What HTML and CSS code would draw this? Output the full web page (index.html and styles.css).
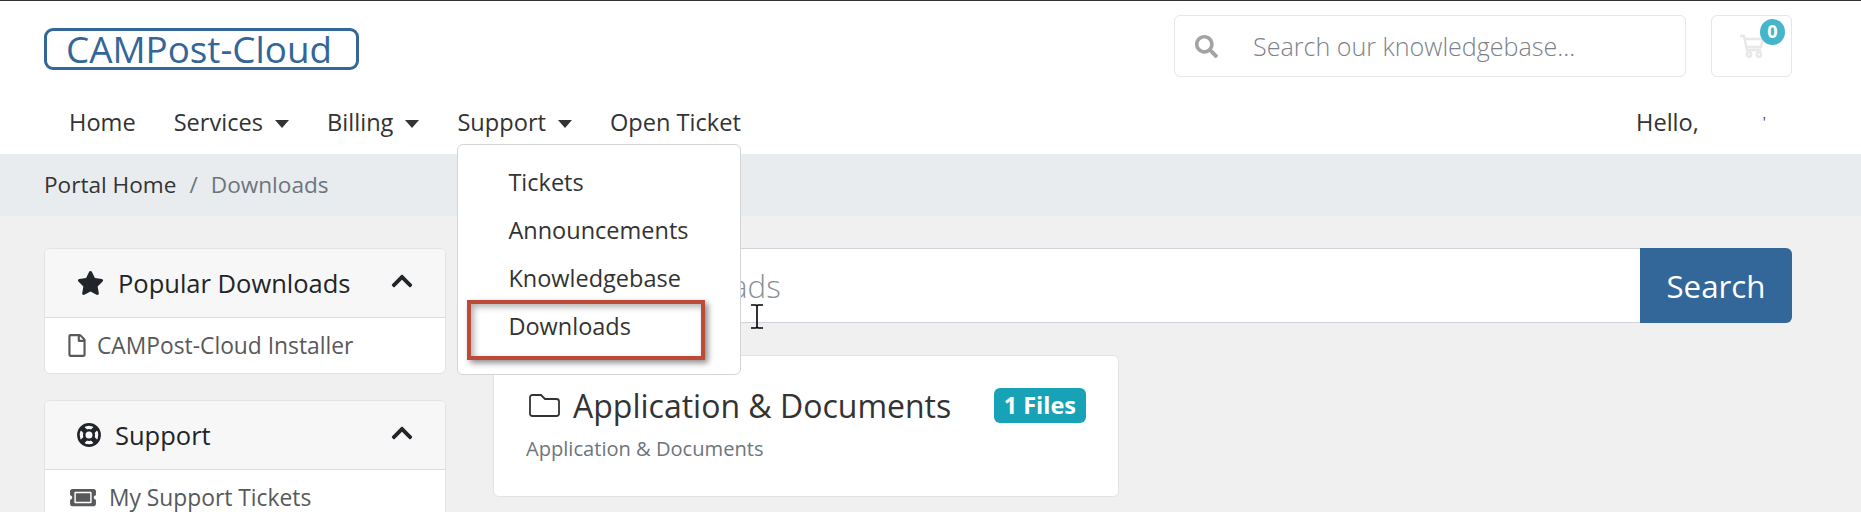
FILE: index.html
```html
<!DOCTYPE html>
<html lang="en">
<head>
    <meta charset="UTF-8">
    <meta name="viewport" content="width=device-width, initial-scale=1.0">
    <title>Downloads - CAMPost-Cloud</title>
    <link rel="stylesheet" href="styles.css">
</head>
<body>

    <header class="site-header">
        <div class="top-row">
            <a class="logo" href="#">CAMPost-Cloud</a>
            <div class="header-tools">
                <div class="kb-search">
                    <svg class="kb-search-icon" viewBox="0 0 512 512"><path d="M505 442.7L405.3 343c-4.5-4.5-10.6-7-17-7H372c27.6-35.3 44-79.7 44-128C416 93.1 322.9 0 208 0S0 93.1 0 208s93.1 208 208 208c48.3 0 92.7-16.4 128-44v16.3c0 6.4 2.5 12.5 7 17l99.7 99.7c9.4 9.4 24.6 9.4 33.9 0l28.3-28.3c9.4-9.4 9.4-24.6.1-34zM208 336c-70.7 0-128-57.2-128-128 0-70.7 57.2-128 128-128 70.7 0 128 57.2 128 128 0 70.7-57.2 128-128 128z"/></svg>
                    <span class="kb-search-text">Search our knowledgebase...</span>
                </div>
                <a class="cart-button" href="#">
                    <svg class="cart-icon" viewBox="0 0 26 24"><path d="M1 2h4l3 14h14M6 5h18l-2 8H8"/><circle cx="10" cy="20.5" r="2.2"/><circle cx="20" cy="20.5" r="2.2"/></svg>
                    <span class="cart-count">0</span>
                </a>
            </div>
        </div>

        <nav class="main-nav">
            <ul class="nav-links">
                <li><a href="#">Home</a></li>
                <li><a href="#">Services<span class="caret"></span></a></li>
                <li><a href="#">Billing<span class="caret"></span></a></li>
                <li class="nav-open">
                    <a href="#">Support<span class="caret"></span></a>
                    <!-- Open dropdown with the annotation box drawn on top -->
                    <ul class="dropdown">
                        <li><a href="#">Tickets</a></li>
                        <li><a href="#">Announcements</a></li>
                        <li><a href="#">Knowledgebase</a></li>
                        <li><a href="#">Downloads</a></li>
                        <li class="highlight-box"></li>
                    </ul>
                </li>
                <li><a href="#">Open Ticket</a></li>
            </ul>
            <div class="account">Hello,<span class="account-name">'</span></div>
        </nav>
    </header>

    <div class="breadcrumb-bar">
        <a href="#">Portal Home</a>
        <span class="breadcrumb-sep">/</span>
        <span class="breadcrumb-current">Downloads</span>
    </div>

    <main class="page-body">
        <aside class="sidebar">
            <section class="panel">
                <div class="panel-heading">
                    <svg class="panel-icon star-icon" viewBox="0 0 576 512"><path d="M259.3 17.8L194 150.2 47.9 171.5c-26.2 3.8-36.7 36.1-17.7 54.6l105.7 103-25 145.5c-4.5 26.3 23.2 46 46.4 33.7L288 439.6l130.7 68.7c23.2 12.2 50.9-7.4 46.4-33.7l-25-145.5 105.7-103c19-18.5 8.5-50.8-17.7-54.6L382 150.2 316.7 17.8c-11.7-23.6-45.6-23.9-57.4 0z"/></svg>
                    <h3>Popular Downloads</h3>
                    <svg class="chevron" viewBox="0 0 448 512"><path d="M240.971 130.524l194.343 194.343c9.373 9.373 9.373 24.569 0 33.941l-22.667 22.667c-9.357 9.357-24.522 9.375-33.901.04L224 227.495 69.255 381.516c-9.379 9.335-24.544 9.317-33.901-.04l-22.667-22.667c-9.373-9.373-9.373-24.569 0-33.941L207.03 130.525c9.372-9.373 24.568-9.373 33.941-.001z"/></svg>
                </div>
                <a class="panel-item" href="#">
                    <svg class="file-icon" viewBox="0 0 384 512"><path d="M369.9 97.9L286 14C277 5 264.8-.1 252.1-.1H48C21.5 0 0 21.5 0 48v416c0 26.5 21.5 48 48 48h288c26.5 0 48-21.5 48-48V131.9c0-12.7-5.1-25-14.1-34zM332.1 128H256V51.9l76.1 76.1zM48 464V48h160v104c0 13.3 10.7 24 24 24h104v288H48z"/></svg>
                    CAMPost-Cloud Installer
                </a>
            </section>

            <section class="panel">
                <div class="panel-heading">
                    <svg class="panel-icon ring-icon" viewBox="0 0 24 24"><circle class="ring-line" cx="12" cy="12" r="10.6"/><circle class="ring-line" cx="12" cy="12" r="4.8"/><path class="ring-spoke" d="M4.5 4.5l4 4M19.5 4.5l-4 4M4.5 19.5l4-4M19.5 19.5l-4-4"/></svg>
                    <h3>Support</h3>
                    <svg class="chevron" viewBox="0 0 448 512"><path d="M240.971 130.524l194.343 194.343c9.373 9.373 9.373 24.569 0 33.941l-22.667 22.667c-9.357 9.357-24.522 9.375-33.901.04L224 227.495 69.255 381.516c-9.379 9.335-24.544 9.317-33.901-.04l-22.667-22.667c-9.373-9.373-9.373-24.569 0-33.941L207.03 130.525c9.372-9.373 24.568-9.373 33.941-.001z"/></svg>
                </div>
                <a class="panel-item" href="#">
                    <svg class="ticket-icon" viewBox="0 0 576 512"><path d="M128 160h320v192H128V160zm400 96c0 26.51 21.49 48 48 48v96c0 26.51-21.49 48-48 48H48c-26.51 0-48-21.49-48-48v-96c26.51 0 48-21.49 48-48s-21.49-48-48-48v-96c0-26.51 21.49-48 48-48h480c26.51 0 48 21.49 48 48v96c-26.51 0-48 21.49-48 48zm-48-104c0-13.255-10.745-24-24-24H120c-13.255 0-24 10.745-24 24v208c0 13.255 10.745 24 24 24h336c13.255 0 24-10.745 24-24V152z"/></svg>
                    My Support Tickets
                </a>
            </section>
        </aside>

        <div class="content">
            <div class="dl-search">
                <div class="dl-search-input">Search downloads</div>
                <button class="dl-search-button">Search</button>
                <!-- Mouse pointer caught in the screenshot -->
                <svg class="text-cursor" viewBox="0 0 14 25"><path d="M1 1h5l1 1 1-1h5M7 2v21M1 24h5l1-1 1 1h5"/></svg>
            </div>

            <div class="category-card">
                <div class="category-title">
                    <svg class="folder-icon" viewBox="0 0 31 23"><path d="M3.5 1h8.5l4 4h11.500a2.500 2.500 0 0 1 2.500 2.500v12a2.500 2.500 0 0 1-2.500 2.500h-24a2.500 2.500 0 0 1-2.500-2.500v-16a2.500 2.500 0 0 1 2.500-2.500z"/></svg>
                    <span class="category-name">Application &amp; Documents</span>
                    <span class="file-count">1 Files</span>
                </div>
                <p class="category-desc">Application &amp; Documents</p>
            </div>
        </div>
    </main>

</body>
</html>
```

FILE: styles.css
```css
* {
    box-sizing: border-box;
}
html, body {
    height: 512px;
    overflow: hidden;
}
body {
    margin: 0;
    background-color: #f0f0f0;
    color: #333;
    font-family: "Open Sans", sans-serif;
    font-size: 23.6px;
}
a {
    color: inherit;
    text-decoration: none;
}
ul {
    list-style: none;
    margin: 0;
    padding: 0;
}

/* Header */
.site-header {
    height: 154px;
    background-color: #fff;
    border-top: 1px solid #333;
    padding: 14px 69px 0 44px;
}
.top-row {
    display: flex;
    justify-content: space-between;
    height: 62px;
}
.logo {
    display: flex;
    align-items: center;
    justify-content: center;
    width: 315px;
    height: 42px;
    margin-top: 13px;
    padding-right: 5px;
    border: 3px solid #336699;
    border-radius: 9px;
    color: #336699;
    font-size: 36.8px;
    line-height: 1;
}
.header-tools {
    display: flex;
    gap: 25px;
}
.kb-search {
    display: flex;
    align-items: center;
    width: 512px;
    padding-left: 20px;
    border: 1px solid #e6e6e6;
    border-radius: 6px;
}
.kb-search-icon {
    width: 23px;
    height: 23px;
    margin-right: 35px;
    fill: #a3a3a3;
}
.kb-search-text {
    color: #7b828a;
    font-size: 25.1px;
    font-weight: 300;
}
.cart-button {
    position: relative;
    display: flex;
    align-items: center;
    width: 81px;
    padding-left: 27px;
    border: 1px solid #e6e6e6;
    border-radius: 6px;
}
.cart-icon {
    width: 26px;
    height: 24px;
    fill: none;
    stroke: #e8e8e8;
    stroke-width: 2.4;
}
.cart-count {
    position: absolute;
    top: 3px;
    left: 48px;
    width: 25px;
    height: 26px;
    border-radius: 50%;
    background-color: #45b5c9;
    color: #fff;
    font-size: 18px;
    font-weight: 700;
    line-height: 25px;
    text-align: center;
}

/* Navigation */
.main-nav {
    display: flex;
    justify-content: space-between;
    padding-left: 6px;
}
.nav-links {
    display: flex;
    padding-top: 30px;
}
.nav-links > li {
    position: relative;
    padding: 0 19px;
    line-height: 30px;
}
.caret {
    display: inline-block;
    margin-left: 12px;
    vertical-align: 3px;
    border-top: 8px solid #333;
    border-left: 7px solid transparent;
    border-right: 7px solid transparent;
}
.account {
    width: 156px;
    padding-top: 30px;
    line-height: 30px;
}
.account-name {
    margin-left: 64px;
    font-size: 14px;
    vertical-align: 4px;
}

.dropdown {
    position: absolute;
    z-index: 10;
    top: 37px;
    left: 19px;
    width: 284px;
    padding: 13px 0 24px;
    background-color: #fff;
    border: 1px solid #d4d4d4;
    border-radius: 6px;
    font-size: 23.5px;
}
.dropdown li {
    height: 48px;
    padding-left: 50px;
    line-height: 48px;
}
.dropdown .highlight-box {
    position: absolute;
    top: 155px;
    left: 9px;
    width: 238px;
    height: 60px;
    padding: 0;
    border: 4px solid #bb4b36;
    box-shadow: 3px 3px 6px rgba(0, 0, 0, 0.45), inset 3px 3px 6px rgba(0, 0, 0, 0.3);
}

/* Breadcrumb */
.breadcrumb-bar {
    display: flex;
    align-items: center;
    gap: 13px;
    height: 62px;
    padding-left: 44px;
    padding-bottom: 2px;
    background-color: #e9ecef;
    font-size: 22.6px;
}
.breadcrumb-sep,
.breadcrumb-current {
    color: #6c757d;
}

/* Page */
.page-body {
    display: grid;
    grid-template-columns: 402px 1fr;
    gap: 47px;
    padding: 32px 69px 0 44px;
}
.panel {
    margin-bottom: 26px;
    background-color: #fff;
    border: 1px solid #e3e3e3;
    border-radius: 6px;
    overflow: hidden;
}
.panel-heading {
    display: flex;
    align-items: center;
    height: 69px;
    padding: 0 32px 0 32px;
    background-color: #f7f7f7;
    border-bottom: 1px solid #dcdcdc;
    color: #212529;
}
.panel-heading h3 {
    flex: 1;
    margin: 0;
    font-size: 25.5px;
    font-weight: 400;
}
.panel-icon {
    margin-right: 14px;
    fill: #212529;
}
.star-icon {
    width: 27px;
    height: 24px;
}
.ring-icon {
    width: 24px;
    height: 24px;
    fill: none;
}
.ring-line {
    fill: none;
    stroke: #212529;
    stroke-width: 2.6;
}
.ring-spoke {
    fill: none;
    stroke: #212529;
    stroke-width: 5;
}
.chevron {
    width: 22px;
    height: 24px;
    margin-top: -4px;
    fill: #212529;
}
.panel-item {
    display: flex;
    align-items: center;
    height: 55px;
    padding-left: 23px;
    color: #58595b;
    font-size: 22.8px;
}
.file-icon {
    width: 18px;
    height: 23px;
    margin-right: 11px;
    fill: #58595b;
}
.ticket-icon {
    width: 26px;
    height: 23px;
    margin: 0 13px 0 2px;
    fill: #58595b;
}

.dl-search {
    position: relative;
    display: flex;
    height: 75px;
}
.dl-search-input {
    flex: 1;
    padding-left: 29px;
    background-color: #fff;
    border: 1px solid #cfd4da;
    border-right: 0;
    color: #8a9097;
    font-size: 31.3px;
    font-weight: 300;
    line-height: 75px;
}
.dl-search-button {
    width: 152px;
    background-color: #336699;
    border: 0;
    border-radius: 0 6px 6px 0;
    color: #fff;
    font-family: inherit;
    font-size: 31.3px;
}
.text-cursor {
    position: absolute;
    top: 56px;
    left: 257px;
    width: 14px;
    height: 25px;
    fill: none;
    stroke: #000;
    stroke-width: 1.6;
}
.category-card {
    width: 626px;
    height: 142px;
    margin-top: 32px;
    padding: 31px 32px 0 35px;
    background-color: #fff;
    border: 1px solid #e3e3e3;
    border-radius: 6px;
}
.category-title {
    display: flex;
    align-items: center;
    height: 36px;
}
.folder-icon {
    width: 31px;
    height: 23px;
    margin-right: 13px;
    fill: none;
    stroke: #333;
    stroke-width: 1.8;
}
.category-name {
    flex: 1;
    font-size: 32px;
}
.file-count {
    padding: 0 10px;
    background-color: #17a2b8;
    border-radius: 6px;
    color: #fff;
    font-size: 23.5px;
    font-weight: 700;
    line-height: 35px;
}
.category-desc {
    margin: 12px 0 0 -3px;
    color: #6c757d;
    font-size: 20.1px;
}
```
